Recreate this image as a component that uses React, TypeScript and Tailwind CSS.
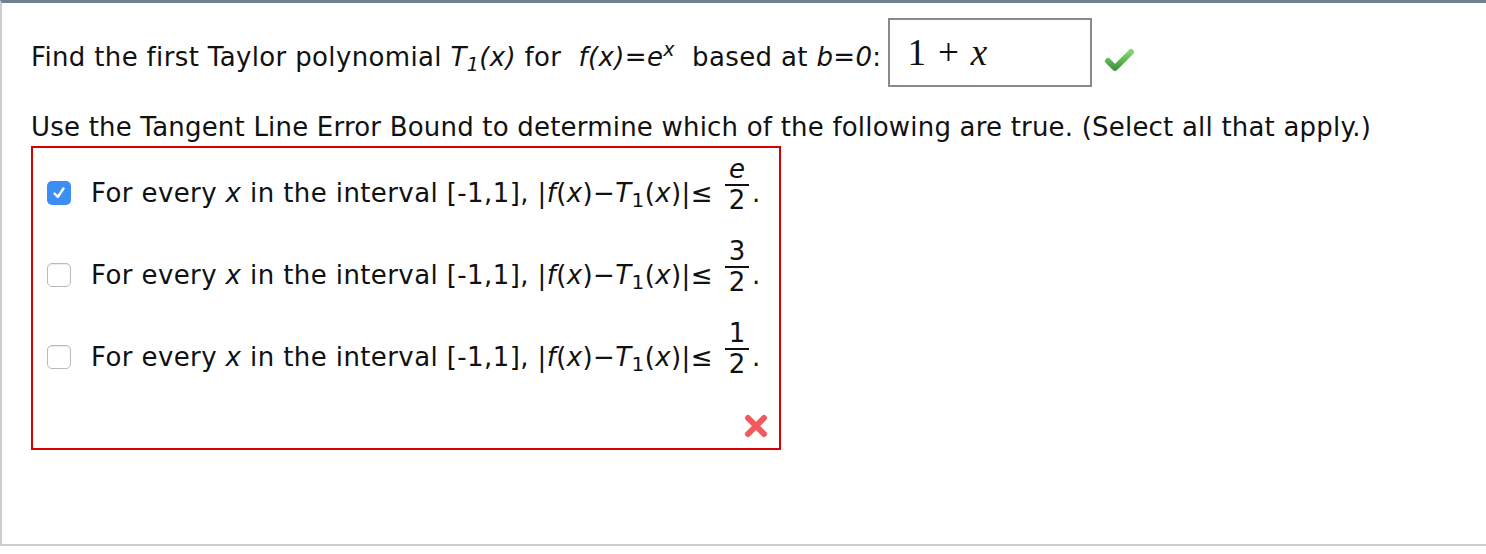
const FONT = "font-['DejaVu_Sans',Verdana,sans-serif]";

function Frac({ top, italic }: { top: string; italic?: boolean }) {
  return (
    <span className="ml-[12px] mr-[3px] inline-flex flex-col items-center align-[24px] text-[26px] leading-[23px] tracking-normal">
      <span className={italic ? "italic" : ""}>{top}</span>
      <span className="my-[3px] block h-[2px] w-[24px] bg-[#111]" />
      <span>2</span>
    </span>
  );
}

function GreenCheck() {
  return (
    <svg width="32" height="26" viewBox="0 0 32 26" aria-hidden>
      <defs>
        <linearGradient id="gc" x1="0" y1="0" x2="0" y2="1">
          <stop offset="0" stopColor="#86d46f" />
          <stop offset="1" stopColor="#3e9a3b" />
        </linearGradient>
      </defs>
      <path
        d="M5 14 L12 21 L28 5"
        fill="none"
        stroke="url(#gc)"
        strokeWidth="6"
        strokeLinecap="round"
        strokeLinejoin="round"
      />
    </svg>
  );
}

function RedX() {
  return (
    <svg width="26" height="24" viewBox="0 0 26 24" aria-hidden>
      <path
        d="M5 4 L21 20 M21 4 L5 20"
        stroke="#f2585c"
        strokeWidth="6"
        strokeLinecap="round"
      />
    </svg>
  );
}

function Box({ checked }: { checked?: boolean }) {
  if (checked) {
    return (
      <span className="flex size-[24px] shrink-0 items-center justify-center rounded-[5px] bg-[#3a8ef4]">
        <svg width="16" height="16" viewBox="0 0 16 16" aria-hidden>
          <path
            d="M3.5 8.5 L6.8 12 L12.5 3.5"
            fill="none"
            stroke="white"
            strokeWidth="2.4"
            strokeLinecap="round"
            strokeLinejoin="round"
          />
        </svg>
      </span>
    );
  }
  return (
    <span className="block size-[24px] shrink-0 rounded-[5px] border border-[#b9b9b9] bg-white shadow-[inset_0_1px_1px_rgba(0,0,0,0.08)]" />
  );
}

function Option({ checked, top, italic }: { checked?: boolean; top: string; italic?: boolean }) {
  return (
    <div className="flex h-[82px] items-center gap-[20px]">
      <Box checked={checked} />
      <div className="mb-[12px] whitespace-nowrap leading-[32px] tracking-[0.4px]">
        For every <i>x</i> in the interval [-1,1], |<i>f</i>(<i>x</i>)−<i>T</i>
        <span className="text-[20px] align-[-5px]">1</span>(<i>x</i>)|≤
        <Frac top={top} italic={italic} />.
      </div>
    </div>
  );
}

export default function App() {
  return (
    <div className={`${FONT} h-[554px] bg-white text-[26px] tracking-[0.2px] text-[#111]`}>
      <div className="h-[546px] border-t-[3px] border-b-2 border-l-2 border-t-[#6f8493] border-b-[#cccccc] border-l-[#cccccc] pl-[29px]">
        <div className="mt-[15px] flex h-[69px] items-center whitespace-nowrap">
          <span className="pt-[8px] leading-[32px] tracking-[0.35px]">
            Find the first Taylor polynomial{" "}
            <i>
              T<span className="text-[19px] align-[-5px]">1</span>(x)
            </i>{" "}
            for&nbsp;{" "}
            <i>
              f(x)=e<span className="text-[19px] align-[10px]">x</span>
            </i>
            &nbsp; based at <i>b=0</i>:
          </span>
          <div className="ml-[7px] flex h-[69px] w-[204px] items-center border-2 border-[#8a8a8a] pl-[17px] font-['Liberation_Serif',serif] text-[37px] tracking-normal">
            <span>1</span>
            <span className="mx-[12px]">+</span>
            <i>x</i>
          </div>
          <span className="mt-[14px] ml-[11px]">
            <GreenCheck />
          </span>
        </div>
        <div className="mt-[24px] whitespace-nowrap leading-[32px]">
          Use the Tangent Line Error Bound to determine which of the following are true. (Select all that apply.)
        </div>
        <div className="mt-[3px] w-[750px] border-2 border-[#d50000] pt-[4px] pr-[10px] pb-[10px] pl-[14px]">
          <Option checked top="e" italic />
          <Option top="3" />
          <Option top="1" />
          <div className="mt-[16px] flex justify-end">
            <RedX />
          </div>
        </div>
      </div>
    </div>
  );
}
